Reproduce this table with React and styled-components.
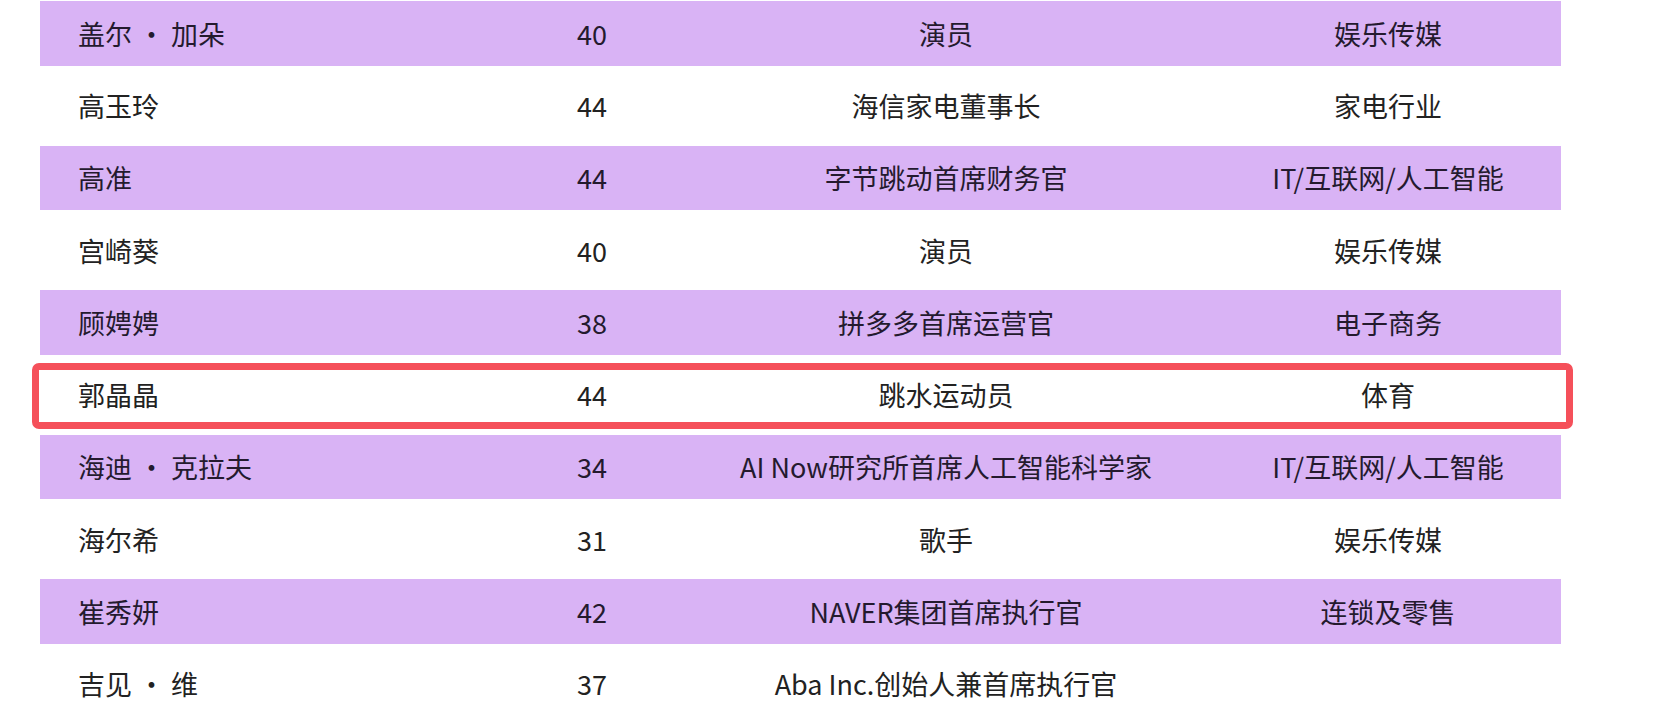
import React from "react";
import styled, { createGlobalStyle } from "styled-components";

const GlobalStyle = createGlobalStyle`
  html, body {
    margin: 0;
    padding: 0;
    background: #ffffff;
  }
  body {
    font-family: "Noto Sans CJK SC", "Noto Sans", sans-serif;
    overflow: hidden;
  }
`;

const Page = styled.div`
  width: 1665px;
  height: 722px;
  padding: 1px 104px 0 40px;
  box-sizing: border-box;
  background: #ffffff;
`;

const Table = styled.div`
  display: flex;
  flex-direction: column;
  width: 1521px;
`;

const Row = styled.div`
  position: relative;
  display: grid;
  grid-template-columns: 430px 244px 464px 1fr;
  align-items: center;
  height: ${(p) => (p.$shaded ? "64.5px" : "80px")};
  background: ${(p) => (p.$shaded ? "#d9b3f5" : "#ffffff")};
  color: ${(p) => (p.$shaded ? "#241a2e" : "#222222")};
`;

const Cell = styled.div`
  font-size: 27px;
  font-weight: 400;
  line-height: 1;
  white-space: nowrap;
  text-align: ${(p) => (p.$align === "left" ? "left" : "center")};
  padding-left: ${(p) => p.$padLeft || 0}px;
`;

const Highlight = styled.div`
  position: absolute;
  top: 8px;
  bottom: 6px;
  left: -8px;
  right: -12px;
  border: 7px solid #f5505a;
  border-radius: 7px;
  pointer-events: none;
`;

const rows = [
  ["盖尔 · 加朵", "40", "演员", "娱乐传媒"],
  ["高玉玲", "44", "海信家电董事长", "家电行业"],
  ["高准", "44", "字节跳动首席财务官", "IT/互联网/人工智能"],
  ["宫崎葵", "40", "演员", "娱乐传媒"],
  ["顾娉娉", "38", "拼多多首席运营官", "电子商务"],
  ["郭晶晶", "44", "跳水运动员", "体育"],
  ["海迪 · 克拉夫", "34", "AI Now研究所首席人工智能科学家", "IT/互联网/人工智能"],
  ["海尔希", "31", "歌手", "娱乐传媒"],
  ["崔秀妍", "42", "NAVER集团首席执行官", "连锁及零售"],
  ["吉见 · 维", "37", "Aba Inc.创始人兼首席执行官", ""],
];

export default function App() {
  return (
    <>
      <GlobalStyle />
      <Page>
        <Table>
          {rows.map((r, i) => (
            <Row key={i} $shaded={i % 2 === 0}>
              <Cell $align="left" $padLeft={38}>{r[0]}</Cell>
              <Cell>{r[1]}</Cell>
              <Cell>{r[2]}</Cell>
              <Cell $padLeft={37}>{r[3]}</Cell>
              {r[0] === "郭晶晶" && <Highlight />}
            </Row>
          ))}
        </Table>
      </Page>
    </>
  );
}
